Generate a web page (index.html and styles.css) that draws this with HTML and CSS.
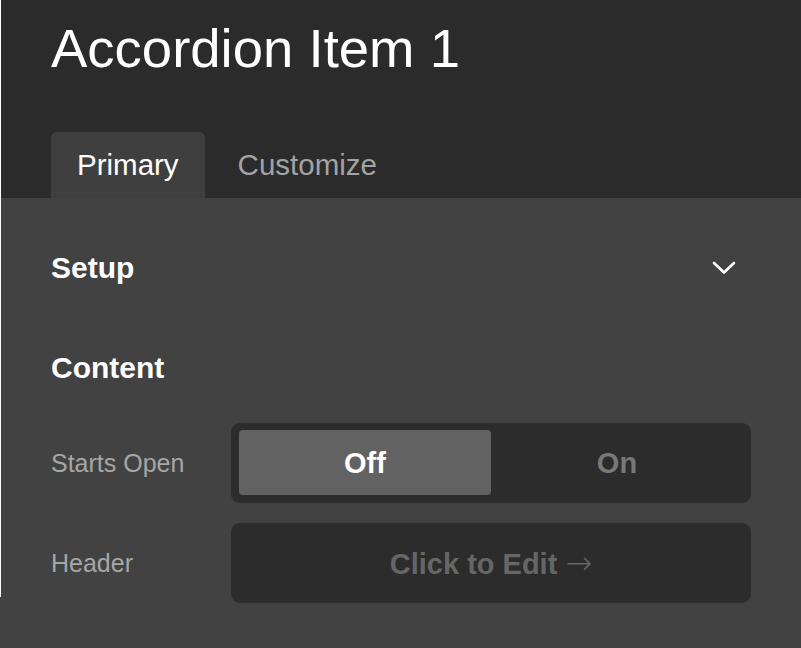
FILE: index.html
```html
<!DOCTYPE html>
<html lang="en">
<head>
    <meta charset="UTF-8">
    <meta name="viewport" content="width=device-width, initial-scale=1.0">
    <title>Accordion Item 1</title>
    <link rel="stylesheet" href="styles.css">
</head>
<body>
    <div class="app">
        <!-- Cabecera con titulo y pestañas -->
        <div class="header">
            <h1>Accordion Item 1</h1>
            <div class="tabs">
                <div class="tab active">Primary</div>
                <div class="tab">Customize</div>
            </div>
        </div>

        <!-- Panel de opciones -->
        <div class="panel">
            <div class="section-row">
                <h2>Setup</h2>
                <svg class="chevron" width="24" height="14" viewBox="0 0 24 14">
                    <path d="M2 2 L12 11.5 L22 2" fill="none" stroke="#fff" stroke-width="2.6" stroke-linecap="round" stroke-linejoin="round"/>
                </svg>
            </div>
            <h2 class="content-title">Content</h2>
            <div class="fields">
                <label class="field-label">Starts Open</label>
                <div class="toggle">
                    <button class="toggle-option selected">Off</button>
                    <button class="toggle-option">On</button>
                </div>
                <label class="field-label">Header</label>
                <button class="edit-field">Click to Edit <span class="arrow">&rarr;</span></button>
            </div>
        </div>
    </div>
</body>
</html>
```

FILE: styles.css
```css
html {
    background: #424242;
}
body {
    margin: 0;
    font-family: 'Liberation Sans', Arial, sans-serif;
    color: #fff;
}
.app {
    position: relative;
    min-height: 100vh;
}
.app::before {
    content: '';
    position: absolute;
    left: 0;
    top: 0;
    width: 1px;
    height: 597px;
    background: #ffffff;
}
.header {
    background: #2b2b2b;
    padding: 19px 50px 0 51px;
}
.header h1 {
    margin: 0;
    font-size: 54.5px;
    font-weight: 400;
    line-height: 60px;
}
.tabs {
    display: flex;
    gap: 7px;
    margin-top: 53px;
}
.tab {
    padding: 0 26px;
    height: 66px;
    line-height: 66px;
    font-size: 29.5px;
    color: #a3a3a3;
    border-radius: 6px 6px 0 0;
}
.tab.active {
    background: #3f3f3f;
    color: #fff;
}
.panel {
    padding: 0 50px 0 51px;
}
.section-row {
    display: flex;
    justify-content: space-between;
    align-items: center;
    height: 140px;
}
.panel h2 {
    margin: 0;
    font-size: 30px;
    font-weight: 700;
    line-height: 40px;
}
.chevron {
    margin-right: 15px;
}
.content-title {
    padding-top: 10px;
}
.fields {
    display: grid;
    grid-template-columns: 180px 1fr;
    grid-auto-rows: 80px;
    row-gap: 20px;
    margin-top: 35px;
}
.field-label {
    display: flex;
    align-items: center;
    font-size: 25px;
    color: #a6a6a6;
}
.toggle {
    display: flex;
    padding: 7px 8px 8px;
    background: #2c2c2c;
    border-radius: 9px;
}
.toggle-option,
.edit-field {
    border: none;
    font-family: inherit;
    font-size: 29px;
    font-weight: 700;
    cursor: pointer;
}
.toggle-option {
    flex: 1;
    padding-top: 2px;
    background: transparent;
    color: #787878;
    border-radius: 4px;
}
.toggle-option.selected {
    background: #626262;
    color: #fff;
}
.edit-field {
    background: #2c2c2c;
    color: #666;
    border-radius: 9px;
}
.edit-field .arrow {
    font-family: 'DejaVu Sans', sans-serif;
    font-weight: 200;
    font-size: 32px;
}
```
